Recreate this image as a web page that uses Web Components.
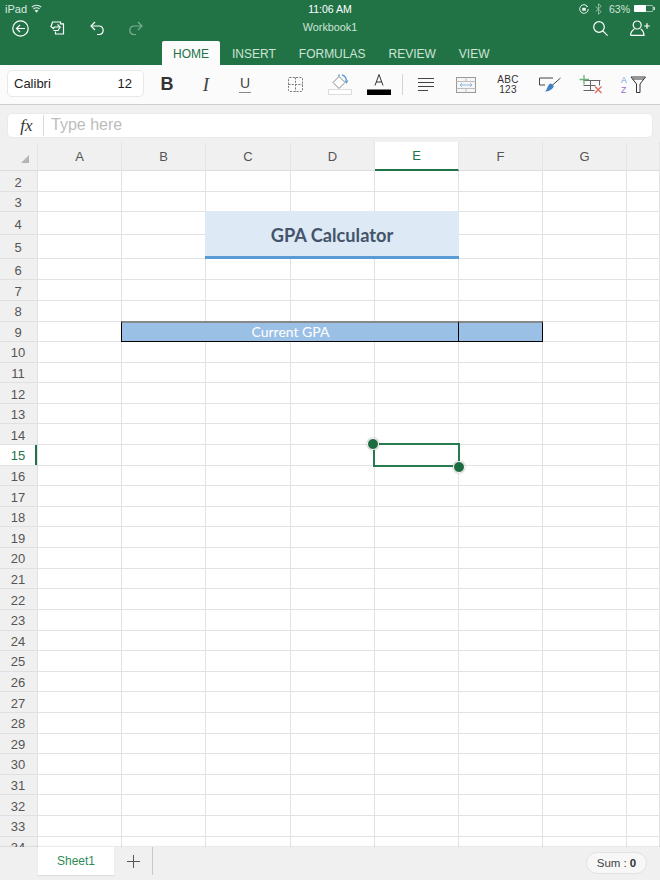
<!DOCTYPE html>
<html>
<head>
<meta charset="utf-8">
<title>Workbook1</title>
<style>
  html, body { margin: 0; padding: 0; background: #f0f0f0; }
  body { width: 660px; height: 880px; overflow: hidden; font-family: "Liberation Sans", Arial, sans-serif; }
  #app { display: flex; flex-direction: column; height: 880px; }
</style>
</head>
<body>
<div id="app">
  <xl-header></xl-header>
  <xl-toolbar></xl-toolbar>
  <xl-formula></xl-formula>
  <xl-sheet></xl-sheet>
  <xl-footer></xl-footer>
</div>
<script>
// top green block: status bar, title row, ribbon tabs
class XlHeader extends HTMLElement {
  constructor() {
    super();
    this.attachShadow({ mode: 'open' });
    this.shadowRoot.innerHTML = `
    <style>
      :host { display: block; height: 65px; background: #217346; color: #fff; flex: none; }
      .status { display: grid; grid-template-columns: 1fr auto 1fr; height: 17px; align-items: center; font-size: 11px; padding: 0 5px; }
      .left { display: flex; align-items: center; gap: 4px; color: #dcebe2; }
      .time { font-size: 10.5px; }
      .right { display: flex; align-items: center; justify-content: flex-end; color: #cfe3d7; font-size: 10.5px; }
      .title { display: flex; align-items: center; height: 24px; box-sizing: border-box; padding: 0 10px 2px 12px; position: relative; }
      .title svg { display: block; flex: none; }
      .actions { display: flex; align-items: center; }
      .name { position: absolute; left: 0; right: 0; top: 4px; text-align: center; font-size: 10.8px; color: #cfe3d7; }
      .end { margin-left: auto; display: flex; align-items: center; gap: 22px; }
      .tabs { display: flex; height: 24px; padding-left: 162px; font-size: 12px; color: #cfe3d7; }
      .tab { display: flex; align-items: center; padding: 2px 11px 0 12px; }
      .tab.on { background: #fbfbfb; color: #217346; border-radius: 2px 2px 0 0; width: 58px; box-sizing: border-box; justify-content: center; padding: 2px 0 0; }
    </style>
    <div class="status">
      <div class="left">iPad
        <svg width="11" height="9" viewBox="0 0 11 9" fill="none" stroke="#dcebe2" stroke-width="1.2"><path d="M.8 3.2a6.6 6.6 0 0 1 9.4 0M2.5 5a4.2 4.2 0 0 1 6 0"/><path d="M5.5 8.8L3.6 6.6a2.7 2.7 0 0 1 3.8 0z" fill="#dcebe2" stroke="none"/></svg>
      </div>
      <div class="time">11:06 AM</div>
      <div class="right">
        <svg style="margin-right:6px" width="10" height="10" viewBox="0 0 10 10" fill="none" stroke="#e6f0ea" stroke-width="1"><path d="M8.5 2.5A4.3 4.3 0 1 0 9.3 5"/><path d="M7.6 1.5l1.4 1.3-1.8.5z" fill="#e6f0ea" stroke="none"/><rect x="3.2" y="3.8" width="3.6" height="3" fill="#e6f0ea" stroke="none"/></svg>
        <svg style="margin-right:7px" width="7" height="12" viewBox="0 0 7 12" fill="none" stroke="#8fb8a2" stroke-width="1"><path d="M.6 3.5l5.6 5.2-2.7 2.6V.7l2.7 2.6L.6 8.5"/></svg>
        <span style="margin-right:4px">63%</span>
        <svg width="21" height="7" viewBox="0 0 21 7"><rect x=".5" y=".5" width="18.5" height="6" rx="1" fill="none" stroke="#cfe0d6" stroke-width=".7"/><rect x="0" y="0" width="12" height="7" rx="1" fill="#fff"/><rect x="19.5" y="2" width="1.5" height="3" fill="#cfe0d6"/></svg>
      </div>
    </div>
    <div class="title">
      <div class="actions">
        <svg width="17" height="17" viewBox="0 0 17 17" fill="none" stroke="#fff" stroke-width="1.2"><circle cx="8.5" cy="8.5" r="7.7"/><path d="M13 8.5H4.6M8 5L4.5 8.5 8 12"/></svg>
        <svg style="margin-left:21px" width="15" height="14" viewBox="0 0 15 14" fill="none" stroke="#fff" stroke-width="1.2"><path d="M7 1h3.5V2.800H13.500V13H5.500V10.500"/><path d="M7 1L2.500 1 1 5.500l2.500 2 1-1.500H10L7.500 3.500"/><path d="M10 6.500l-2 3H3.500"/></svg>
        <svg style="margin-left:25px" width="15" height="14" viewBox="0 0 15 14" fill="none" stroke="#fff" stroke-width="1.2"><path d="M5 1L1 5l4 4"/><path d="M1 5h8.5a4.3 4.3 0 0 1 0 8.500H7"/></svg>
        <svg style="margin-left:23px" width="15" height="14" viewBox="0 0 15 14" fill="none" stroke="#7fae95" stroke-width="1.2"><path d="M10 1l4 4-4 4"/><path d="M14 5H5.500a4.3 4.3 0 0 0 0 8.500H8"/></svg>
      </div>
      <div class="name">Workbook1</div>
      <div class="end">
        <svg width="15" height="15" viewBox="0 0 15 15" fill="none" stroke="#fff" stroke-width="1.2"><circle cx="6" cy="6" r="5.3"/><path d="M9.8 9.8L14.6 14.6"/></svg>
        <svg width="20" height="16" viewBox="0 0 20 16" fill="none" stroke="#fff" stroke-width="1.2"><circle cx="7.2" cy="5" r="4"/><path d="M.6 15.400c0-3.600 2-5.400 3.700-6.500M.6 15.400H14c0-2.700-1.300-5-3.200-6.500"/><path d="M14.200 6h5.600M17 3.200v5.600"/></svg>
      </div>
    </div>
    <div class="tabs">
      <div class="tab on">HOME</div>
      <div class="tab">INSERT</div>
      <div class="tab">FORMULAS</div>
      <div class="tab">REVIEW</div>
      <div class="tab">VIEW</div>
    </div>`;
  }
}
customElements.define('xl-header', XlHeader);

class XlToolbar extends HTMLElement {
  constructor() {
    super();
    this.attachShadow({ mode: 'open' });
    this.shadowRoot.innerHTML = `
    <style>
      :host { display: flex; align-items: center; height: 40px; box-sizing: border-box; flex: none; background: #fbfbfb; border-bottom: 1px solid #cfcfcf; padding: 0 0 0 7px; }
      .font { width: 137px; height: 27px; margin-bottom: 2px; box-sizing: border-box; background: #fff; border: 1px solid #e8e8e8; border-radius: 5px; display: flex; align-items: center; justify-content: space-between; padding: 0 11px 0 6px; font-size: 13px; color: #222; }
      .tools { display: grid; grid-template-columns: 1px 44px 34px 44px 56px 34px 44px 2px 46px 34px 50px 34px 48px 38px; align-items: center; justify-items: center; height: 30px; }
      .b { font: 700 18px "Liberation Sans", sans-serif; color: #333; }
      .i { font: italic 400 19px "Liberation Serif", serif; color: #444; }
      .u { font: 400 14px/15px "Liberation Sans", sans-serif; color: #444; border-bottom: 1px solid #888; padding: 0 .5px 1px; }
      .abc { color: #333; text-align: center; letter-spacing: .3px; font: 400 10px/10px "Liberation Sans", sans-serif; }
      .abc div { height: 10px; }
      .sep { width: 1px; height: 21px; background: #d5d5d5; }
      svg { display: block; }
    </style>
    <div class="font"><span>Calibri</span><span>12</span></div>
    <div class="tools">
      <span></span>
      <div class="b">B</div>
      <div class="i">I</div>
      <div class="u">U</div>
      <svg width="15" height="15" viewBox="0 0 15 15" fill="none" stroke="#777" stroke-width="1" stroke-dasharray="2 1.3"><rect x=".5" y=".5" width="14" height="14" rx="1"/><path d="M7.5 .5v14M.5 7.5h14"/></svg>
      <svg width="24" height="21" viewBox="0 0 24 21" fill="none"><rect x=".5" y="15.5" width="23" height="5" fill="#fff" stroke="#ddd"/><path d="M5 8.5L11 2.5l6 6-6 6z" fill="#fff" stroke="#888"/><path d="M11 2.5V.5M14 1c2.500.5 4 2.500 4.500 5.500" stroke="#5b9bd5" stroke-width="1.4"/><path d="M16.500 6.500h4l-2 3.200z" fill="#5b9bd5"/></svg>
      <svg width="24" height="21" viewBox="0 0 24 21"><path d="M8 11.500L12 .5l4 11M9.300 8h5.400" fill="none" stroke="#333" stroke-width="1"/><rect x="0" y="15.500" width="24" height="5.500" fill="#000"/></svg>
      <div class="sep"></div>
      <svg width="16" height="13" viewBox="0 0 16 13" stroke="#444" stroke-width="1"><path d="M0 .5h16M0 4.500h16M0 8.500h16M0 12.500h10"/></svg>
      <svg width="20" height="16" viewBox="0 0 20 16" fill="#f6f6f6" stroke="#999" stroke-width="1"><rect x=".5" y=".5" width="19" height="15"/><path d="M.5 4.500h19M.5 11.500h19M10 .5v4M10 11.500v4" stroke="#bdbdbd"/><path d="M4 8h12M6 6.200L4 8l2 1.800M14 6.200L16 8l-2 1.800" stroke="#8cbbe3" fill="none"/></svg>
      <div class="abc"><div>ABC</div><div>123</div></div>
      <svg width="22" height="15" viewBox="0 0 22 15" fill="none"><path d="M14 1H.5v7H6" stroke="#444"/><path d="M21.500 1L13 8.500" stroke="#444"/><path d="M11.500 6.500c1.500.4 2.800 1.600 3.300 3C13 13 9.500 14.500 6 14.500c2.500-1.500 2.500-7 5.500-8z" fill="#3f7fc4"/></svg>
      <svg width="24" height="19" viewBox="0 0 24 19" fill="none"><path d="M4.500 5.500h17M4.500 10.500h12M4.500 15.500h11M11.500 5.500v10M20.500 5.500v5" stroke="#666"/><path d="M5 0v9.500M.5 4.500h9.500" stroke="#6bb27f" stroke-width="1.3"/><path d="M16 11.500l6.500 6.500M22.500 11.500L16 18" stroke="#e06a5f" stroke-width="1.3"/></svg>
      <svg width="26" height="17" viewBox="0 0 26 17" fill="none"><text x="0" y="7" font-family="Liberation Sans" font-size="8.5" fill="#6f9fdb">A</text><text x="0" y="16.500" font-family="Liberation Sans" font-size="8.5" fill="#9070cc">Z</text><path d="M10 1h14.500l-5.500 7v8.500h-3.500V8z" stroke="#333"/><path d="M11.500 3h11.500" stroke="#333"/></svg>
    </div>`;
  }
}
customElements.define('xl-toolbar', XlToolbar);

class XlFormula extends HTMLElement {
  constructor() {
    super();
    this.attachShadow({ mode: 'open' });
    this.shadowRoot.innerHTML = `
    <style>
      :host { display: block; height: 37px; box-sizing: border-box; flex: none; background: #f0f0f0; padding: 8px 7px 4px; }
      .field { height: 25px; background: #fff; border-radius: 5px; border: 1px solid #eaeaea; box-sizing: border-box; display: flex; align-items: center; }
      .fx { font: italic 17px "Liberation Serif", serif; color: #333; width: 35px; text-align: center; box-sizing: border-box; padding-left: 2px; }
      .line { width: 1px; height: 21px; background: #d8d8d8; }
      .ph { font-size: 16px; color: #bdbdbd; margin: -1px 0 0 7px; }
    </style>
    <div class="field"><span class="fx">fx</span><span class="line"></span><span class="ph">Type here</span></div>`;
  }
}
customElements.define('xl-formula', XlFormula);

// the grid itself, built from rows 2..34 so the lines stay in flow
class XlSheet extends HTMLElement {
  constructor() {
    super();
    this.attachShadow({ mode: 'open' });
    const cols = ['A', 'B', 'C', 'D', 'E', 'F', 'G', ''];
    const heights = { 2: 21, 3: 20, 4: 23, 5: 24, 6: 21, 7: 21, 8: 20.5, 9: 20.5 };
    const rows = [];
    for (let r = 2; r <= 34; r++) rows.push(r);
    const track = rows.map(r => (heights[r] || 20.62) + 'px').join(' ');
    const head = cols.map((c, i) => {
      return `<div class="ch ${c === 'E' ? 'on' : ''}" style="grid-row:1;grid-column:${i + 2}">${c}</div>`;
    }).join('');
    const body = rows.map((r, ri) => {
      const row = ri + 2;
      let out = `<div class="rh ${r === 15 ? 'on' : ''}" style="grid-row:${row};grid-column:1">${r}</div>`;
      cols.forEach((c, i) => {
        if ((r === 4 || r === 5) && 'CDE'.includes(c) && c) return;
        if (r === 9 && 'BCDEF'.includes(c) && c) return;
        out += `<div class="c" style="grid-row:${row};grid-column:${i + 2}"></div>`;
      });
      return out;
    }).join('');
    this.shadowRoot.innerHTML = `
    <style>
      :host { display: block; height: 705px; flex: none; overflow: hidden; background: #fff; position: relative; }
      .grid { display: grid; grid-template-columns: 38px 84px 84px 85px 84px 84px 84px 84px 33px; grid-template-rows: 29px ${track}; position: relative; }
      .ch, .rh, .c { box-sizing: border-box; min-width: 0; min-height: 0; }
      .ch { background: #f0f0f0; border-right: 1px solid #e6e6e6; border-bottom: 1px solid #dcdcdc; display: flex; align-items: center; justify-content: center; font-size: 13px; color: #555; }
      .ch.on { background: #fff; color: #217346; border-bottom: 2px solid #217346; }
      .corner { background: #f0f0f0; border-right: 1px solid #e6e6e6; border-bottom: 1px solid #dcdcdc; position: relative; }
      .corner svg { position: absolute; left: 21px; top: 13px; }
      .rh { background: #f0f0f0; border-right: 1px solid #e0e0e0; border-bottom: 1px solid #e0e0e0; display: flex; align-items: center; justify-content: center; font-size: 13px; color: #555; padding: 2px 1px 0 0; }
      .rh.on { background: #fff; color: #217346; box-shadow: inset -2px 0 0 #217346; }
      .c { border-right: 1px solid #e2e2e2; border-bottom: 1px solid #e2e2e2; }
      .title { grid-column: 4 / 7; grid-row: 4 / 6; margin: -1px 0 0 -1px; padding-top: 2px; background: #dde9f5; border-bottom: 3px solid #5b9bd5; box-sizing: border-box; display: flex; align-items: center; justify-content: center; font: 700 18.2px Lato, sans-serif; color: #44546a; }
      .gpa { background: #9bc0e6; border: 1px solid #000; border-top: 2px solid #888; box-sizing: border-box; margin: -1px 0 0 -1px; display: flex; align-items: center; justify-content: center; font: 400 14px Lato, sans-serif; color: #fff; }
      .gpa.main { grid-column: 3 / 7; grid-row: 9; border-right: 0; }
      .gpa.side { grid-column: 7; grid-row: 9; }
      .sel { position: absolute; left: 373px; top: 301px; width: 87px; height: 24px; box-sizing: border-box; border: 2px solid #2a7a50; }
      .dot { position: absolute; width: 12px; height: 12px; box-sizing: border-box; border-radius: 50%; background: #1f6b41; border: 1.5px solid #fff; box-shadow: 0 0 2px rgba(0,0,0,.35); }
    </style>
    <div class="grid">
      <div class="corner" style="grid-row:1;grid-column:1"><svg width="8" height="8" style="display:block"><path d="M8 0v8H0z" fill="#b5b5b5"/></svg></div>
      ${head}
      ${body}
      <div class="title">GPA Calculator</div>
      <div class="gpa main">Current GPA</div>
      <div class="gpa side"></div>
      <div class="sel"></div>
      <div class="dot" style="left:367.3px;top:296.3px"></div>
      <div class="dot" style="left:453px;top:318.7px"></div>
    </div>`;
  }
}
customElements.define('xl-sheet', XlSheet);

class XlFooter extends HTMLElement {
  constructor() {
    super();
    this.attachShadow({ mode: 'open' });
    this.shadowRoot.innerHTML = `
    <style>
      :host { display: flex; flex: none; height: 33px; background: #f0f0f0; box-shadow: 0 -1px 1px rgba(0,0,0,.08); padding-left: 38px; position: relative; font-size: 12px; }
      .sheet { width: 76px; height: 28px; background: #fff; color: #2e8b57; display: flex; align-items: center; justify-content: center; box-shadow: 0 1px 1px rgba(0,0,0,.08); }
      .add { width: 39px; height: 28px; box-sizing: border-box; border-right: 1px solid #c8c8c8; display: flex; align-items: center; justify-content: center; }
      .sum { margin-left: auto; margin-right: 13px; margin-top: 5px; width: 61px; height: 22px; box-sizing: border-box; border: 1px solid #e2e2e2; border-radius: 11px; background: #f7f7f7; display: flex; align-items: center; justify-content: center; font-size: 11.5px; color: #444; gap: 3px; }
      .sum b { color: #333; }
    </style>
    <div class="sheet">Sheet1</div>
    <div class="add"><svg width="13" height="13" viewBox="0 0 13 13" stroke="#555" stroke-width="1"><path d="M0 6.500h13M6.500 0v13"/></svg></div>
    <div class="sum"><span>Sum :</span><b>0</b></div>`;
  }
}
customElements.define('xl-footer', XlFooter);
</script>
</body>
</html>
